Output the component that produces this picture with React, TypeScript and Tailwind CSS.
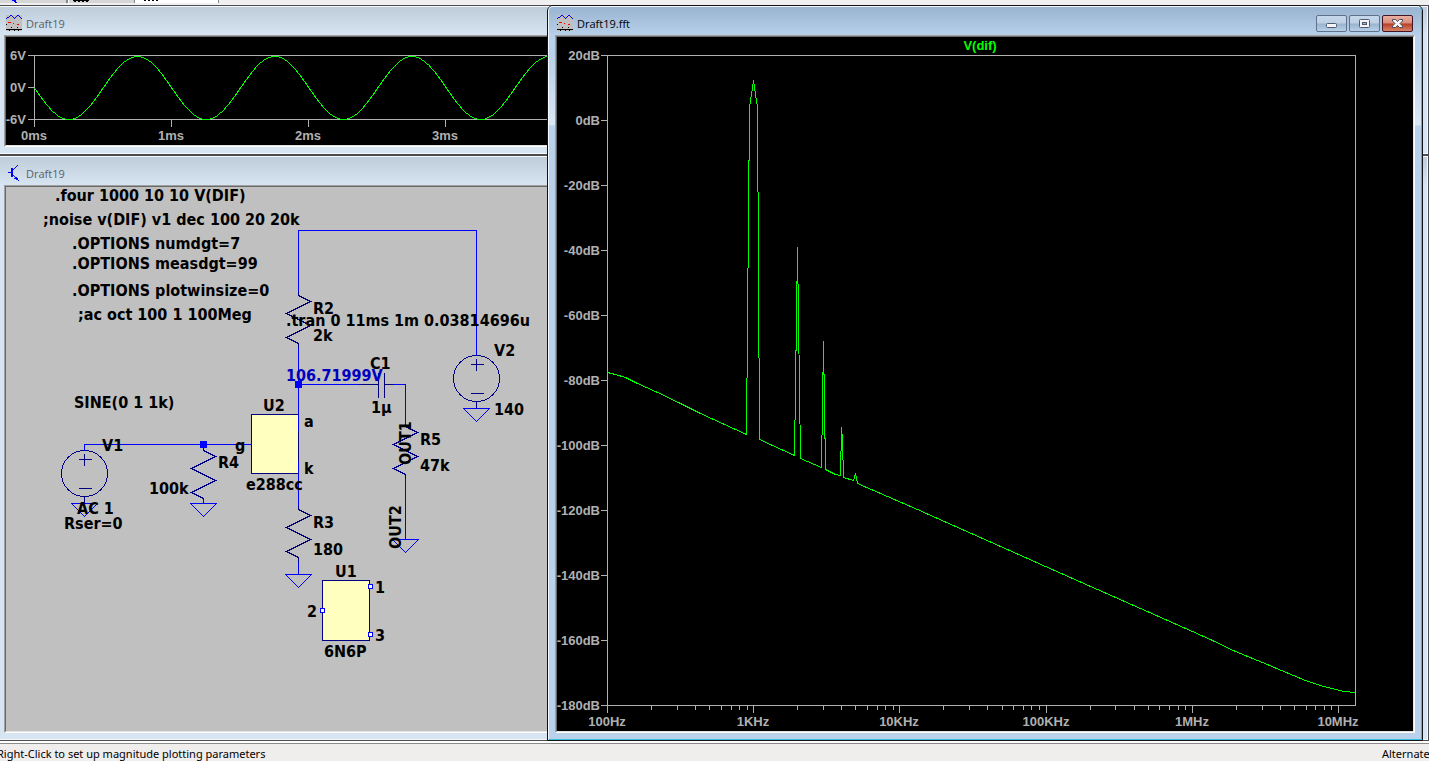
import React from 'react';
import clsx from 'clsx';

type Point = [number, number];

const toPoints = (points: Point[]) => points.map(p => p.join(',')).join(' ');

/* ---------- Icons ---------- */

const WaveIcon: React.FC = () => (
    <svg width="16" height="16" viewBox="0 0 16 16" shapeRendering="crispEdges" className="shrink-0" aria-hidden="true">
        <rect width="16" height="16" fill="#c0c0c0" />
        <path d="M0 3h1v1H0zM1 2h1v1H1zM2 2h1v1H2zM3 1h1v1H3zM4 0h2v1H4zM6 1h1v1H6zM7 2h1v1H7zM8 3h1v1H8zM9 2h1v1H9zM10 1h1v1h-1zM11 0h2v1h-2zM13 1h1v1h-1zM14 2h1v1h-1zM15 3h1v1h-1z" fill="#0000ff" />
        <path d="M2 7h3v1H2zM7 8h1v1H7zM11 9h2v1h-2z" fill="#ff0000" />
        <path d="M0 9h1v1H0zM5 12h1v1H5zM11 12h1v1h-1zM0 14h16v1H0zM3 15h1v1H3zM8 15h1v1H8zM12 15h1v1h-1z" fill="#000" />
    </svg>
);

const TransistorIcon: React.FC = () => (
    <svg width="16" height="16" viewBox="0 0 16 16" shapeRendering="crispEdges" className="shrink-0" aria-hidden="true">
        <path d="M2 7h3v1H2zM5 3h2v9H5zM7 4h1v1H7zM8 3h1v1H8zM9 2h1v1H9zM10 1h1v1h-1zM11 0h1v1h-1zM7 10h1v1H7zM8 11h1v1H8zM9 12h1v1H9zM10 12h1v3h-1zM8 13h4v1H8zM11 14h1v1h-1zM12 15h1v1h-1z" fill="#0000ff" />
    </svg>
);

const MinimizeGlyph: React.FC = () => (
    <svg width="11" height="5" viewBox="0 0 11 5" className="mt-1" aria-hidden="true">
        <rect x="0.5" y="0.5" width="10" height="4" rx="1" fill="#f4f4f4" stroke="#4f5a70" />
    </svg>
);

const MaximizeGlyph: React.FC = () => (
    <svg width="11" height="9" viewBox="0 0 11 9" aria-hidden="true">
        <rect x="0.5" y="0.5" width="10" height="8" rx="1" fill="#f4f4f4" stroke="#4f5a70" />
        <rect x="3.5" y="3.5" width="4" height="2" fill="#9ab4cf" stroke="#4f5a70" />
    </svg>
);

const CloseGlyph: React.FC = () => (
    <svg width="11" height="9" viewBox="0 0 11 9" aria-hidden="true">
        <path d="M.5.5h3l2 2 2-2h3v1.500l-2.500 2.500 2.500 2.500v1.500h-3l-2-2-2 2h-3V7L3 4.500.5 2z" fill="#f6f6f6" stroke="#4a4a5c" strokeLinejoin="round" />
    </svg>
);

/* ---------- Window frame ---------- */

interface WindowProps {
    title: string;
    icon: React.ReactNode;
    active?: boolean;
    className?: string;
    clientClass: string;
    children: React.ReactNode;
}

const captionButton = 'flex h-[17px] w-[31px] items-center justify-center rounded-[2px] border';

const MdiWindow: React.FC<WindowProps> = ({ title, icon, active, className, clientClass, children }) => (
    <section
        className={clsx(
            'flex flex-col border',
            active ? 'overflow-hidden rounded-t-[6px] border-[#101418]' : 'border-[#4d4d4f]',
            className,
        )}
    >
        <div
            className={clsx(
                'flex min-h-0 flex-1 flex-col border border-t-[#f4f8fc] border-l-[#f4f8fc]',
                active
                    ? 'rounded-t-[5px] border-r-[#36bfe0] border-b-[#36bfe0] bg-[linear-gradient(to_bottom,#99b4d1_0px,#b9d1ea_29px,#b9d1ea_50px,#dbe7f5_118px,#b9d1ea_119px)]'
                    : 'border-r-[#f4f8fc] border-b-[#f4f8fc] bg-[linear-gradient(to_bottom,#bfcddb_0px,#d7e4f2_28px)]',
            )}
        >
            <header className="flex h-7 shrink-0 items-start justify-between pr-2 pl-2">
                <div className="flex items-start gap-1 pt-2">
                    {icon}
                    <h2 className={clsx('text-[11px] leading-[18px]', active ? 'text-black' : 'text-[#5a5f66]')}>{title}</h2>
                </div>
                {active && (
                    <div className="flex gap-[2px] pt-2">
                        <button aria-label="Minimize" className={clsx(captionButton, 'border-[#60718a] bg-[linear-gradient(to_bottom,#c6d8ea_0%,#bcd0e4_48%,#98b2cd_52%,#b8d0e8_100%)]')}>
                            <MinimizeGlyph />
                        </button>
                        <button aria-label="Maximize" className={clsx(captionButton, 'border-[#60718a] bg-[linear-gradient(to_bottom,#c6d8ea_0%,#bcd0e4_48%,#98b2cd_52%,#b8d0e8_100%)]')}>
                            <MaximizeGlyph />
                        </button>
                        <button aria-label="Close" className={clsx(captionButton, 'border-[#431422] bg-[linear-gradient(to_bottom,#eab0a4_0%,#d98a7a_48%,#b83d26_52%,#d88468_100%)]')}>
                            <CloseGlyph />
                        </button>
                    </div>
                )}
            </header>
            <div className="mx-[6px] mb-[6px] flex min-h-0 flex-1 border border-t-[#a0a0a0] border-r-white border-b-white border-l-[#a0a0a0]">
                <div className={clsx('min-w-0 flex-1 overflow-hidden border border-t-[#696969] border-r-[#e3e3e3] border-b-[#e3e3e3] border-l-[#696969]', clientClass)}>
                    {children}
                </div>
            </div>
        </div>
    </section>
);

/* ---------- Transient plot ---------- */

const MS = 137.3;

const sine: Point[] = Array.from({ length: 700 }, (_, i) => [
    34 + i,
    Math.round(87.5 + 31.5 * Math.sin((2 * Math.PI * i) / MS)),
]);

const TransientPlot: React.FC = () => (
    <svg width="900" height="108" viewBox="6 37 900 108" className="block max-w-none" role="img" aria-label="Transient waveform">
        <g transform="translate(0.5 0.5)" fill="none" stroke="#b0b0b0" shapeRendering="crispEdges">
            <path d="M27 55H906M27 87H34M27 119H906M34 55V126" />
            {[1, 2, 3, 4, 5].map(n => (
                <path key={n} d={`M${Math.floor(34 + n * MS)} 119v7`} />
            ))}
            <polyline points={toPoints(sine)} stroke="#00ff00" />
        </g>
        <g className="font-['Liberation_Sans',sans-serif] text-[13px] font-bold" fill="#b0b0b0">
            <text x="26" y="60" textAnchor="end">6V</text>
            <text x="26" y="92" textAnchor="end">0V</text>
            <text x="26" y="124" textAnchor="end">-6V</text>
            {[0, 1, 2, 3, 4].map(n => (
                <text key={n} x={Math.floor(34 + n * MS)} y="140" textAnchor="middle">{n}ms</text>
            ))}
        </g>
    </svg>
);

/* ---------- FFT plot ---------- */

const DECADE = 146.2;
const freqLabels = ['100Hz', '1KHz', '10KHz', '100KHz', '1MHz', '10MHz'];
const dbLabels = [20, 0, -20, -40, -60, -80, -100, -120, -140, -160, -180];

const minorTicks = freqLabels
    .flatMap((_, d) => [2, 3, 4, 5, 6, 7, 8, 9].map(m => Math.round(607 + DECADE * (d + Math.log10(m)))))
    .filter(x => x < 1355);

const spectrum: Point[] = [
    [607, 372], [615, 374], [625, 377], [637, 383], [655, 391], [680, 403], [700, 413],
    [746, 434], [749, 107], [753, 80], [757, 107], [759, 439],
    [794, 455], [797, 247], [800, 458],
    [821, 467], [823, 341], [825, 469],
    [835, 474], [840, 475], [841, 427], [842, 440], [843, 477],
    [853, 480], [855, 473], [857, 483],
    [917, 509], [1045, 566], [1192, 631], [1212, 640], [1235, 651], [1262, 662],
    [1281, 670], [1305, 680], [1320, 685], [1343, 691], [1355, 692],
];

const FftPlot: React.FC = () => (
    <svg width="856" height="694" viewBox="557 37 856 694" className="block max-w-none" role="img" aria-label="FFT of V(dif)">
        <g transform="translate(0.5 0.5)" fill="none" stroke="#b0b0b0" shapeRendering="crispEdges">
            <path d="M607 55H1355V705H607Z" />
            {dbLabels.map((db, i) => (
                <path key={db} d={`M600 ${55 + i * 65}h7`} />
            ))}
            {freqLabels.map((f, i) => (
                <path key={f} d={`M${Math.round(607 + i * DECADE)} 705v7`} />
            ))}
            {minorTicks.map(x => (
                <path key={x} d={`M${x} 705v4`} />
            ))}
            <polyline points={toPoints(spectrum)} stroke="#00ff00" />
        </g>
        <g className="font-['Liberation_Sans',sans-serif] text-[13px] font-bold" fill="#b0b0b0">
            <text x="980" y="50" textAnchor="middle" fill="#00ff00">V(dif)</text>
            {dbLabels.map((db, i) => (
                <text key={db} x="600" y={60 + i * 65} textAnchor="end">{db}dB</text>
            ))}
            {freqLabels.map((f, i) => (
                <text key={f} x={Math.round(607 + i * DECADE)} y="726" textAnchor="middle">{f}</text>
            ))}
        </g>
    </svg>
);

/* ---------- Schematic ---------- */

const labels: [number, number, string][] = [
    [55, 201, '.four 1000 10 10 V(DIF)'],
    [43, 225, ';noise v(DIF) v1 dec 100 20 20k'],
    [72, 249, '.OPTIONS numdgt=7'],
    [72, 269, '.OPTIONS measdgt=99'],
    [72, 296, '.OPTIONS plotwinsize=0'],
    [78, 320, ';ac oct 100 1 100Meg'],
    [286, 326, '.tran 0 11ms 1m 0.03814696u'],
    [313, 314, 'R2'],
    [313, 341, '2k'],
    [494, 356, 'V2'],
    [494, 415, '140'],
    [370, 369, 'C1'],
    [371, 413, '1µ'],
    [263, 411, 'U2'],
    [304, 427, 'a'],
    [304, 474, 'k'],
    [235, 451, 'g'],
    [246, 490, 'e288cc'],
    [74, 408, 'SINE(0 1 1k)'],
    [102, 451, 'V1'],
    [77, 514, 'AC 1'],
    [64, 529, 'Rser=0'],
    [218, 468, 'R4'],
    [149, 494, '100k'],
    [313, 528, 'R3'],
    [313, 555, '180'],
    [420, 445, 'R5'],
    [420, 471, '47k'],
    [335, 577, 'U1'],
    [375, 593, '1'],
    [307, 617, '2'],
    [375, 641, '3'],
    [324, 657, '6N6P'],
];

const Resistor: React.FC<{ x: number; y: number }> = ({ x, y }) => (
    <path d={`M${x} ${y - 4}v4l12 6l-24 12l24 12l-24 12l12 6v4`} />
);

const Ground: React.FC<{ x: number; y: number }> = ({ x, y }) => (
    <path d={`M${x - 13} ${y}h26l-13 13z`} />
);

const Source: React.FC<{ x: number; y: number }> = ({ x, y }) => (
    <g>
        <circle cx={x} cy={y} r="23" />
        <path d={`M${x - 6} ${y - 14}h13M${x} ${y - 20}v12M${x - 6} ${y + 15}h13M${x} ${y + 23}v7`} />
    </g>
);

const Schematic: React.FC = () => (
    <svg width="900" height="544" viewBox="6 187 900 544" className="block max-w-none" role="img" aria-label="Circuit schematic">
        <g transform="translate(0.5 0.5)" fill="none" stroke="#000080" shapeRendering="crispEdges">
            <rect x="251" y="414" width="47" height="59" fill="#ffffc0" />
            <rect x="322" y="580" width="47" height="60" fill="#ffffc0" />
            <Resistor x={298} y={295} />
            <Resistor x={298} y={509} />
            <Resistor x={203} y={450} />
            <Resistor x={405} y={426} />
            <Source x={84} y={473} />
            <Source x={476} y={378} />
            <path d="M358 384H378M378 372V397M384 372V397M384 384H392" />
            <g stroke="#0000ff">
                <path d="M298 291V230H476V355M298 347V430M298 460V505M298 561V574" />
                <path d="M298 384H358M392 384H405V422M405 478V539M84 450V444H251M203 498V503" />
                <Ground x={84} y={503} />
                <Ground x={203} y={503} />
                <Ground x={298} y={574} />
                <Ground x={405} y={539} />
                <Ground x={476} y={408} />
                <path d="M368 584h4v4h-4zM320 608h4v4h-4zM368 632h4v4h-4z" fill="#ffffff" />
            </g>
        </g>
        <path d="M200 441h7v7h-7zM295 381h7v7h-7z" fill="#0000ff" />
        <g className="font-['DejaVu_Sans_Condensed','DejaVu_Sans',sans-serif] text-[16px] font-bold">
            {labels.map(([x, y, text]) => (
                <text key={text} x={x} y={y}>{text}</text>
            ))}
            <text x="286" y="381" fill="#0000c0">106.71999V</text>
            <text transform="translate(411 465) rotate(-90)">OUT1</text>
            <text transform="translate(401 549) rotate(-90)">OUT2</text>
        </g>
    </svg>
);

/* ---------- Page ---------- */

const App: React.FC = () => (
    <div className="flex h-screen flex-col overflow-hidden bg-white font-['Open_Sans','Noto_Sans',sans-serif] text-[11px] text-black">
        {/* Lower edge of the document tabs */}
        <div className="flex h-[5px] shrink-0 items-start bg-[#f0f0f0]">
            <div className="h-[3px] w-[66px] bg-[#d6d6d6] pl-3">
                <svg width="6" height="3" viewBox="0 0 6 3" className="block" shapeRendering="crispEdges" aria-hidden="true">
                    <path d="M0 0h4v1H0zM2 1h2v1H2zM3 2h2v1H3z" fill="#0000ff" />
                </svg>
            </div>
            <div className="h-[3px] w-[2px] bg-[#808890]" />
            <div className="h-[3px] w-[66px] border-l border-white bg-[#d6d6d6] pl-1">
                <svg width="16" height="3" viewBox="0 0 16 3" className="block" shapeRendering="crispEdges" aria-hidden="true">
                    <path d="M0 0h16v1H0zM1 1h2v1H1zM5 1h2v1H5zM9 1h2v1H9zM13 1h2v1h-2z" />
                </svg>
            </div>
            <div className="h-[3px] w-[85px] border-x border-[#808890] bg-white pl-2">
                <svg width="16" height="3" viewBox="0 0 16 3" className="block" shapeRendering="crispEdges" aria-hidden="true">
                    <path d="M1 0h2v1H1zM5 0h2v1H5zM9 0h2v1H9zM13 0h2v1h-2z" />
                </svg>
            </div>
        </div>

        <main className="relative flex min-h-0 flex-1 flex-col">
            <MdiWindow title="Draft19" icon={<WaveIcon />} className="-ml-1 shrink-0" clientClass="bg-black">
                <TransientPlot />
            </MdiWindow>
            <MdiWindow title="Draft19" icon={<TransistorIcon />} className="-ml-1 min-h-0 flex-1" clientClass="bg-[#c0c0c0]">
                <Schematic />
            </MdiWindow>
            <MdiWindow title="Draft19.fft" icon={<WaveIcon />} active className="absolute inset-y-0 right-[6px] left-[547px]" clientClass="bg-black">
                <FftPlot />
            </MdiWindow>
        </main>

        <footer className="mt-[2px] mb-px flex h-[18px] shrink-0 items-center justify-between border-t border-[#8c8c8c] bg-[#f0eded] pt-[2px] font-['Noto_Sans',sans-serif] leading-4 whitespace-nowrap">
            <span className="-ml-[3px]">Right-Click to set up magnitude plotting parameters</span>
            <span className="w-[47px] shrink-0">Alternate</span>
        </footer>
    </div>
);

export default App;
